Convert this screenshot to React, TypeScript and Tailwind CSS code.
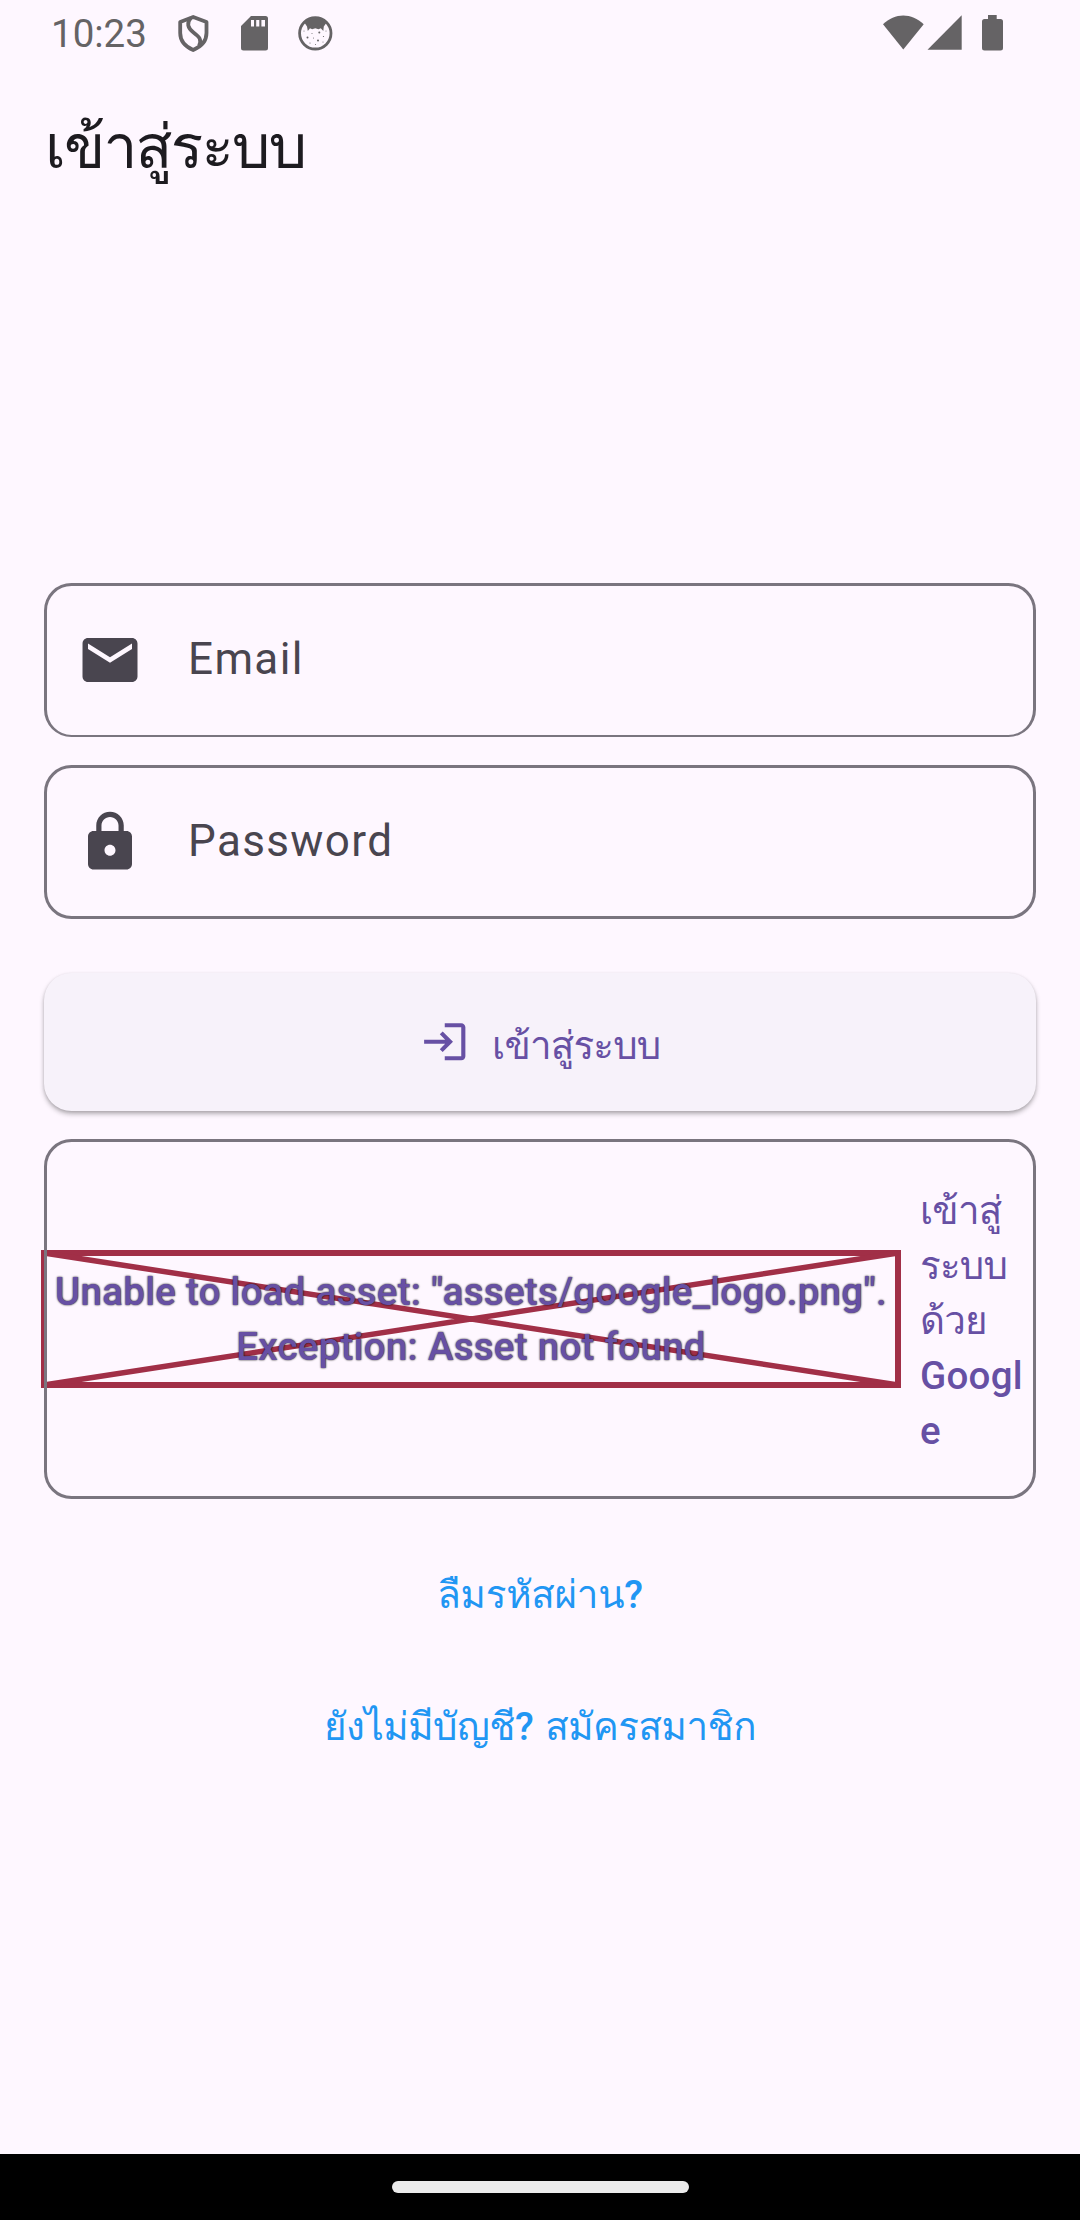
import React from "react";

function StatusBar() {
  return (
    <div className="flex h-[66px] items-start justify-between pl-[51px] pr-[76px] text-[#656365]">
      <div className="flex items-start">
        <span className="mt-[6px] w-[126px] text-[38.5px] leading-[55px]">10:23</span>
        <svg className="mt-[14px] h-[39px] w-[32px]" viewBox="0 0 32 39" fill="none" stroke="currentColor" strokeWidth="3.8" strokeLinejoin="round">
          <path d="M16.2 3L29.500 8V19C29.500 27 24.500 32.500 16.200 36C8 32.500 3.200 27 3.200 19V8Z" />
          <path d="M13.700 4C9.500 9 10.500 14 16.500 18.500C22.500 23 25 25.500 22 32" />
        </svg>
        <svg className="ml-[32px] mt-[16px] h-[35px] w-[27px]" viewBox="0 0 27 35">
          <path fill="currentColor" fillRule="evenodd" d="M10 0H24.500A2.500 2.500 0 0 1 27 2.500V32A2.500 2.500 0 0 1 24.500 34.500H2.500A2.500 2.500 0 0 1 0 32V10ZM10 4V10.500H13V4ZM15.200 4V10.500H18.300V4ZM20.400 4V10.500H24V4Z" />
        </svg>
        <svg className="ml-[30px] mt-[16px] h-[35px] w-[35px]" viewBox="0 0 35 35">
          <circle cx="17.3" cy="17.3" r="15.7" fill="none" stroke="currentColor" strokeWidth="2.8" />
          <path fill="currentColor" d="M6 6C10 2 13 1 17.300 1S25 2 29 6L25.800 10.500L25.300 15L22.800 12.300L20.500 13.300L17.300 12.300L14.200 13.300L12 12.300L9.800 15L9 10.500Z" />
          <g fill="currentColor">
            <circle cx="9.5" cy="21.5" r="1" />
            <circle cx="21.300" cy="16.500" r="1" />
            <circle cx="20" cy="24.500" r="1" />
            <circle cx="14" cy="17.500" r=".5" />
            <circle cx="15.500" cy="22" r=".5" />
            <circle cx="25.500" cy="20.500" r=".6" />
            <circle cx="6" cy="15" r=".5" />
            <circle cx="28" cy="15" r=".5" />
            <circle cx="12" cy="27" r=".6" />
            <circle cx="17.500" cy="28.500" r=".5" />
            <circle cx="25" cy="26" r=".5" />
          </g>
        </svg>
      </div>
      <svg className="mt-[14px] h-[38px] w-[121px]" viewBox="0 0 121 38" fill="currentColor">
        <path d="M0 10.300C12 -1.400 28.500 -1.400 40.700 10.300L20.300 35.500Z" />
        <path d="M78.700 1.200V35.800H44.500Z" />
        <path d="M105 1H113.700V5H117.500A2.500 2.500 0 0 1 120 7.500V34A2.500 2.500 0 0 1 117.500 36.500H101.500A2.500 2.500 0 0 1 99 34V7.500A2.500 2.500 0 0 1 101.500 5H105Z" />
      </svg>
    </div>
  );
}

function Field({ label, icon, className }: { label: string; icon: string; className: string }) {
  return (
    <div className={`flex items-start rounded-[27.5px] border-[3px] border-[#7a757f] pl-[30px] pt-[41px] text-[#49454f] ${className}`}>
      <svg className="h-[66px] w-[66px]" viewBox="0 0 24 24" fill="currentColor">
        <path d={icon} />
      </svg>
      <span className="-mt-[1px] ml-[45px] text-[44px] leading-[66px] tracking-[1.375px]">{label}</span>
    </div>
  );
}

const MAIL =
  "M20 4H4c-1.100 0-1.990.9-1.990 2L2 18c0 1.100.9 2 2 2h16c1.100 0 2-.9 2-2V6c0-1.100-.9-2-2-2zm0 4l-8 5-8-5V6l8 5 8-5v2z";
const LOCK =
  "M18 8h-1V6c0-2.760-2.240-5-5-5S7 3.240 7 6v2H6c-1.100 0-2 .9-2 2v10c0 1.100.9 2 2 2h12c1.100 0 2-.9 2-2V10c0-1.100-.9-2-2-2zm-6 9c-1.100 0-2-.9-2-2s.9-2 2-2 2 .9 2 2-.9 2-2 2zm3.100-9H8.900V6c0-1.710 1.390-3.100 3.100-3.100 1.710 0 3.100 1.390 3.100 3.100v2z";
const LOGIN =
  "M11 7L9.600 8.400l2.600 2.600H2v2h10.200l-2.600 2.600L11 17l5-5-5-5zm9 12h-8v2h8c1.100 0 2-.9 2-2V5c0-1.100-.9-2-2-2h-8v2h8v14z";

function MissingAsset() {
  return (
    <div className="relative -ml-[6px] flex h-[138px] w-[860px] shrink-0 flex-col items-center justify-center">
      <svg className="absolute inset-0 h-[138px] w-[860px]" viewBox="0 0 860 138" fill="none" stroke="#a12f47">
        <rect x="3" y="3" width="854" height="132" strokeWidth="6" />
        <path d="M3 3L857 135M857 3L3 135" strokeWidth="5.5" />
        <path d="M4.500 0V138" stroke="#7a757f" strokeWidth="3" />
      </svg>
      <p className="relative whitespace-nowrap text-center text-[38.5px] font-medium leading-[55px] tracking-[0.275px] [text-shadow:0_0_2px_#000]">
        Unable to load asset: "assets/google_logo.png".
        <br />
        Exception: Asset not found
      </p>
    </div>
  );
}

export default function App() {
  return (
    <div className="flex h-[2220px] w-[1080px] flex-col overflow-hidden bg-[#fef7ff] font-['Roboto','Loma','Noto_Sans',sans-serif]">
      <StatusBar />
      <h1 className="mt-[38px] h-[88px] pl-[45px] text-[60.5px] leading-[88px] tracking-[-1.8px] text-[#1d1b20]">เข้าสู่ระบบ</h1>
      <main className="mt-[391px] flex grow flex-col px-[44px]">
        <Field label="Email" icon={MAIL} className="h-[154px] border-b-2" />
        <Field label="Password" icon={LOCK} className="mt-[28px] h-[154px]" />
        <button className="mt-[54px] flex h-[138px] items-center justify-center rounded-[27.5px] bg-[#f7f2fa] text-[#6750a4] shadow-[0_3px_5px_rgba(0,0,0,0.28),0_1px_3px_rgba(0,0,0,0.1)]">
          <svg className="h-[49.5px] w-[49.5px]" viewBox="0 0 24 24" fill="currentColor">
            <path d={LOGIN} />
          </svg>
          <span className="ml-[23px] mt-[7px] text-[38.5px] font-medium leading-[55px] tracking-[-0.8px]">เข้าสู่ระบบ</span>
        </button>
        <div className="mt-[28px] flex h-[360px] items-center rounded-[27.5px] border-[3px] border-[#7a757f] text-[#6750a4]">
          <MissingAsset />
          <p className="ml-[19px] mt-[3px] whitespace-nowrap text-[38.5px] font-medium leading-[55px]">
            <span className="tracking-[-0.8px]">
              เข้าสู่
              <br />
              ระบบ
              <br />
              ด้วย
            </span>
            <br />
            <span className="tracking-[0.275px]">
              Googl
              <br />e
            </span>
          </p>
        </div>
        <a className="mt-[68px] self-center text-[38.5px] font-medium leading-[55px] tracking-[-0.25px] text-[#2196f3]">ลืมรหัสผ่าน?</a>
        <a className="mt-[77px] self-center text-[38.5px] font-medium leading-[55px] tracking-[-0.5px] text-[#2196f3] [word-spacing:3px]">ยังไม่มีบัญชี? สมัครสมาชิก</a>
      </main>
      <nav className="flex h-[66px] items-center justify-center bg-black">
        <div className="h-[12px] w-[297px] rounded-full bg-[#ebebeb]" />
      </nav>
    </div>
  );
}
